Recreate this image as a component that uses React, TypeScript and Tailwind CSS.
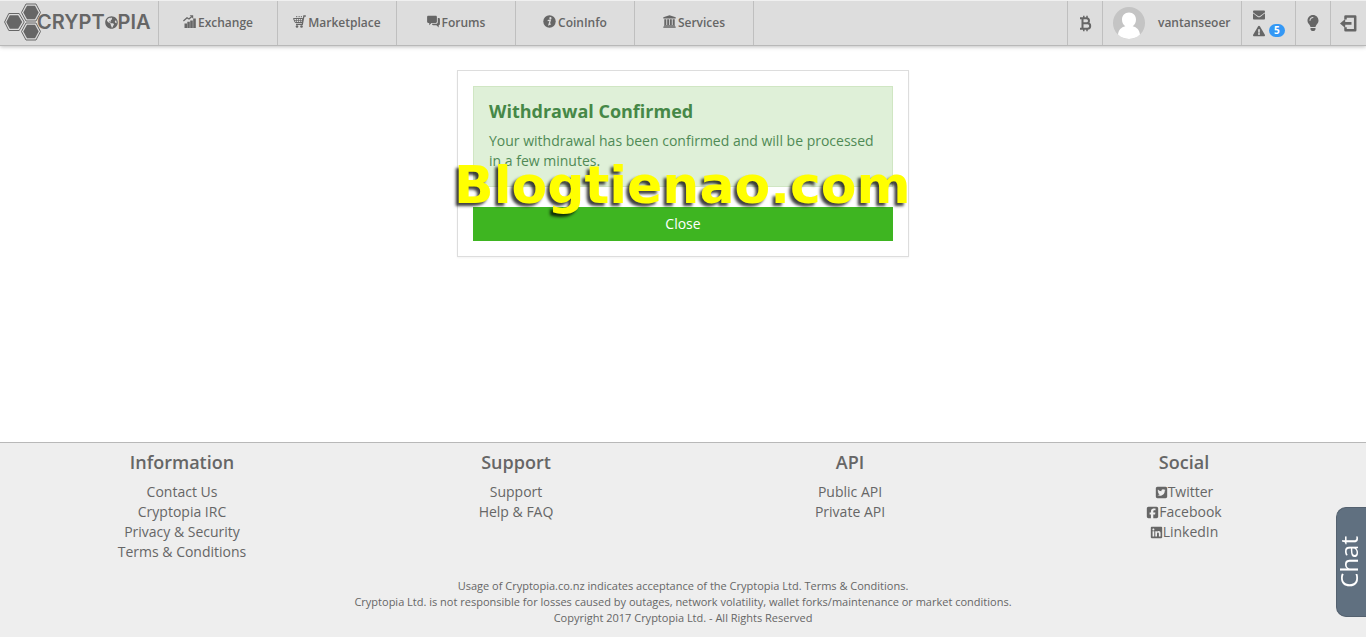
import type { ReactNode } from 'react';
import { FaEnvelope, FaExclamationTriangle, FaGlobeAmericas, FaLightbulb } from 'react-icons/fa';
import { FaLinkedin, FaSquareFacebook, FaSquareTwitter } from 'react-icons/fa6';

const footerColumns = [
  {
    title: 'Information',
    links: [
      { label: 'Contact Us' },
      { label: 'Cryptopia IRC' },
      { label: 'Privacy & Security' },
      { label: 'Terms & Conditions' },
    ],
  },
  { title: 'Support', links: [{ label: 'Support' }, { label: 'Help & FAQ' }] },
  { title: 'API', links: [{ label: 'Public API' }, { label: 'Private API' }] },
  {
    title: 'Social',
    links: [
      { label: 'Twitter', icon: <FaSquareTwitter size={13} /> },
      { label: 'Facebook', icon: <FaSquareFacebook size={13} /> },
      { label: 'LinkedIn', icon: <FaLinkedin size={13} /> },
    ],
  },
] as { title: string; links: { label: string; icon?: ReactNode }[] }[];

function ChartIcon() {
  return (
    <svg width="13" height="13" viewBox="0 0 13 13" fill="currentColor">
      <path d="M1.500 8.500h2.500V13H1.500zM4.300 6.800h2.500V13H4.300zM7.200 5.500h2.600V13H7.200zM10.200 3.500h2.600V13h-2.600z" />
      <path d="M.4 6 4 2.800l2 1.200L8.500 1.700" fill="none" stroke="currentColor" strokeWidth="1.300" />
      <path d="M6.600.2h3.600v3.600z" />
    </svg>
  );
}

function CartIcon() {
  return (
    <svg width="13" height="13" viewBox="0 0 13 13" fill="none" stroke="currentColor">
      <path d="M12.800 1h-1.900L9.300 9.300H3" strokeWidth="1.300" />
      <path d="M.5 3.500h9.300L9 7.500H2.200z" strokeWidth="1" />
      <path d="M1.200 5.500h8M3.500 3.500v4M5.500 3.500v4M7.500 3.500v4" strokeWidth=".7" />
      <path d="M3 1.700h1.300M5.500 1.700h1.300M7.800 1.700H9" strokeWidth="1" />
      <circle cx="4" cy="11.500" r="1.300" fill="currentColor" stroke="none" />
      <circle cx="8.500" cy="11.500" r="1.300" fill="currentColor" stroke="none" />
    </svg>
  );
}

function ChatIcon() {
  return (
    <svg width="13" height="13" viewBox="0 0 13 13" fill="currentColor">
      <path d="M1.300.8h7.400c.7 0 1.200.5 1.200 1.200v4.800c0 .7-.5 1.200-1.200 1.200H4.500L2.200 10.300V8h-.9C.6 8 .1 7.500.1 6.800V2C.1 1.300.6.8 1.300.8z" />
      <path d="M10.800 3h.9c.7 0 1.200.5 1.200 1.200v4.900c0 .7-.5 1.200-1.200 1.200v2.300l-2.300-2.300H6.200c-.7 0-1.200-.5-1.200-1.200v-.3h4.300c.9 0 1.500-.6 1.500-1.500z" />
    </svg>
  );
}

function InfoIcon() {
  return (
    <svg width="13" height="13" viewBox="0 0 13 13">
      <circle cx="6.500" cy="6.500" r="6.200" fill="currentColor" />
      <circle cx="7.400" cy="3.200" r="1.100" fill="#ddd" />
      <path d="M4.700 5.700 7.300 5.200 6 9.600l1.700-.8" fill="none" stroke="#ddd" strokeWidth="1.300" />
    </svg>
  );
}

function BankIcon() {
  return (
    <svg width="13" height="13" viewBox="0 0 13 13" fill="currentColor">
      <path d="M6.500.3 12.700 2.300v1.200H.3V2.300zM1.300 4.200h2v5.800h-2zM4.200 4.200h1.900v5.800H4.200zM6.900 4.200h1.900v5.800H6.900zM9.700 4.200h2v5.800h-2zM1 10.200h11v1H1zM.3 11.600h12.400v1.200H.3z" />
    </svg>
  );
}

function BitcoinIcon() {
  return (
    <svg width="13" height="17" viewBox="0 0 13 17" fill="none" stroke="currentColor">
      <path d="M1 3.300h6.500a2.400 2.400 0 0 1 0 5H4M7.500 8.300h1a2.700 2.700 0 0 1 0 5.400H1M3.500 3.300v10.400" strokeWidth="2" />
      <path d="M4.800.8v2.500M8 .8v2.700M4.800 13.700v2.500M8 13.700v2.500" strokeWidth="1.500" />
    </svg>
  );
}

function SignOutIcon() {
  return (
    <svg width="17" height="17" viewBox="0 0 17 17">
      <path d="M5.500 4.500V1.500h9.700v13.800H5.500v-3" fill="none" stroke="currentColor" strokeWidth="2.500" strokeLinejoin="round" />
      <path d="M0 8.400 5.200 3.900v3.200h6.300v2.700H5.200v3.200z" fill="currentColor" />
    </svg>
  );
}

function Hexagons() {
  return (
    <svg width="37" height="38" viewBox="0 0 37 38" className="shrink-0">
      <g fill="none" stroke="currentColor" strokeWidth="1">
        <path d="M4.800 10.500h10.400l5 8.500-5 8.500H4.800L0.600 19z" />
        <path d="M22 1h10l4.500 8.500L32 18H22l-4.500-8.500z" />
        <path d="M22 20h10l4.500 8.500L32 37H22l-4.500-8.500z" />
      </g>
      <g fill="currentColor">
        <path d="M5.800 12.200h8.400l4 6.800-4 6.800H5.800L2.300 19z" />
        <path d="M23 2.700h8l3.700 6.800L31 16.300h-8l-3.700-6.800z" />
        <path d="M23 21.700h8l3.700 6.800L31 35.300h-8l-3.700-6.800z" />
      </g>
    </svg>
  );
}

function Avatar() {
  return (
    <svg width="32" height="32" viewBox="0 0 32 32">
      <circle cx="16" cy="16" r="16" fill="#c4c4c4" />
      <path
        d="M16 5.500c-4.200 0-7 3-7 7 0 3 1.300 5.500 3.300 6.700C8 20.200 5.500 23 5 27.600A16 16 0 0 0 27 27.600C26.500 23 24 20.200 19.700 19.200 21.700 18 23 15.500 23 12.500c0-4-2.800-7-7-7z"
        fill="#fff"
      />
    </svg>
  );
}

const navItems = [
  { label: 'Exchange', icon: <ChartIcon /> },
  { label: 'Marketplace', icon: <CartIcon /> },
  { label: 'Forums', icon: <ChatIcon /> },
  { label: 'CoinInfo', icon: <InfoIcon /> },
  { label: 'Services', icon: <BankIcon /> },
];

function Header() {
  return (
    <header className="flex h-[46px] border-t border-b border-t-[#f0f0f0] border-b-[#b8b8b8] bg-[#dddddd] text-xs font-semibold shadow-[0_1px_4px_rgba(0,0,0,0.25)]">
      <a href="#" className="flex w-[158px] items-center pb-[2px] pl-1" aria-label="Cryptopia">
        <Hexagons />
        <span className="-ml-1 flex items-center font-['Inter',sans-serif] text-xl leading-5 font-semibold">
          CRYPT
          <FaGlobeAmericas size={13} />
          PIA
        </span>
      </a>
      <nav className="flex flex-1 border-l border-[#bfbfbf]">
        {navItems.map((item) => (
          <a
            key={item.label}
            href="#"
            className="flex w-[119px] items-center justify-center gap-[2px] border-r border-[#bfbfbf]"
          >
            <span className="pb-[3px]">{item.icon}</span>
            {item.label}
          </a>
        ))}
      </nav>
      <div className="flex">
        <a href="#" aria-label="Balances" className="flex w-[35px] items-center justify-center border-l border-[#bfbfbf]">
          <BitcoinIcon />
        </a>
        <a href="#" className="flex w-[139px] items-center gap-[13px] border-l border-[#bfbfbf] pl-[10px]">
          <Avatar />
          vantanseoer
        </a>
        <a
          href="#"
          aria-label="Notifications"
          className="flex w-[54px] flex-col justify-center gap-[3px] border-l border-[#bfbfbf] pl-[11px]"
        >
          <FaEnvelope size={12} />
          <span className="flex items-center gap-1">
            <FaExclamationTriangle size={12} />
            <span className="rounded-full bg-[#3498f5] px-[5px] text-[10px] leading-[13px] font-bold text-white">5</span>
          </span>
        </a>
        <button type="button" aria-label="Theme" className="flex w-[35px] items-center justify-center border-l border-[#bfbfbf]">
          <FaLightbulb size={16} />
        </button>
        <button type="button" aria-label="Log out" className="flex w-9 items-center justify-center border-l border-[#bfbfbf]">
          <SignOutIcon />
        </button>
      </div>
    </header>
  );
}

function Footer() {
  return (
    <footer className="border-t border-[#b8b8b8] bg-[#eeeeee] px-[15px] pt-[9px] pb-[11px] text-center">
      <div className="grid grid-cols-4">
        {footerColumns.map((column) => (
          <div key={column.title}>
            <h4 className="mb-[10px] text-lg leading-5 font-semibold">{column.title}</h4>
            <ul>
              {column.links.map((link) => (
                <li key={link.label} className="flex justify-center">
                  <a href="#" className="flex items-center text-sm leading-5">
                    {link.icon}
                    {link.label}
                  </a>
                </li>
              ))}
            </ul>
          </div>
        ))}
      </div>
      <div className="mt-4 text-[11px] leading-4">
        <p>Usage of Cryptopia.co.nz indicates acceptance of the Cryptopia Ltd. Terms &amp; Conditions.</p>
        <p>
          Cryptopia Ltd. is not responsible for losses caused by outages, network volatility, wallet forks/maintenance or
          market conditions.
        </p>
        <p>Copyright 2017 Cryptopia Ltd. - All Rights Reserved</p>
      </div>
    </footer>
  );
}

export default function App() {
  return (
    <div className="flex min-h-screen flex-col bg-white font-['Open_Sans',sans-serif] text-[#666666]">
      <Header />

      <main className="flex flex-1 items-start justify-center pt-6">
        <div className="relative w-full max-w-[452px] border border-[#dddddd] p-[15px] shadow-xs">
          <div className="mb-5 border border-[#d0e6c3] bg-[#dff0d8] px-[15px] pt-[14px] pb-[15px] text-[#4f8a55]">
            <h4 className="mb-[10px] text-lg leading-5 font-bold text-[#468847]">Withdrawal Confirmed</h4>
            <p className="text-sm leading-5">
              Your withdrawal has been confirmed and will be processed in a few minutes.
            </p>
          </div>
          <button type="button" className="block h-[34px] w-full bg-[#3eb521] text-sm text-white">
            Close
          </button>
          <span className="pointer-events-none absolute top-[86px] left-[-4px] font-['DejaVu_Sans'] text-[52px] leading-[56px] font-bold whitespace-nowrap text-[#ffff00] [text-shadow:-3px_3px_3px_rgba(0,0,0,0.75)]">
            Blogtienao.com
          </span>
        </div>
      </main>

      <Footer />

      <button
        type="button"
        className="fixed right-0 bottom-5 flex h-[110px] w-[30px] items-center justify-center rounded-l-[10px] border border-r-0 border-[#54616f] bg-[#607080] pr-[6px] text-2xl text-white"
      >
        <span className="rotate-180 [writing-mode:vertical-rl]">Chat</span>
      </button>
    </div>
  );
}
